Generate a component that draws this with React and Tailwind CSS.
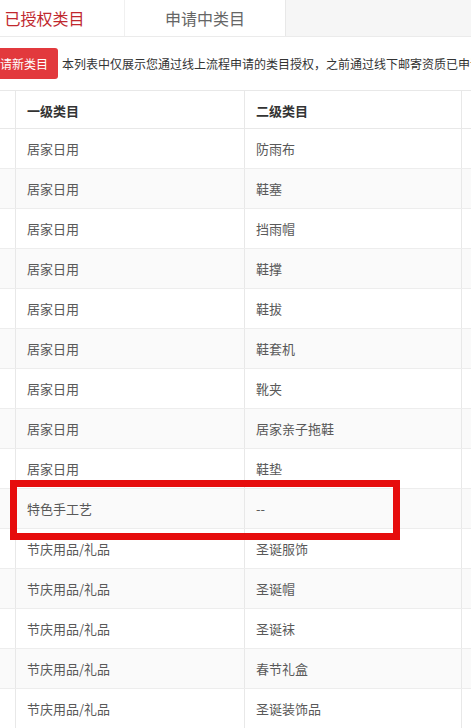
import React from "react";

const rows = [
  ["居家日用", "防雨布"],
  ["居家日用", "鞋塞"],
  ["居家日用", "挡雨帽"],
  ["居家日用", "鞋撑"],
  ["居家日用", "鞋拔"],
  ["居家日用", "鞋套机"],
  ["居家日用", "靴夹"],
  ["居家日用", "居家亲子拖鞋"],
  ["居家日用", "鞋垫"],
  ["特色手工艺", "--"],
  ["节庆用品/礼品", "圣诞服饰"],
  ["节庆用品/礼品", "圣诞帽"],
  ["节庆用品/礼品", "圣诞袜"],
  ["节庆用品/礼品", "春节礼盒"],
  ["节庆用品/礼品", "圣诞装饰品"],
];

const cols = "grid grid-cols-[47px_229px_217px_160px]";
const cell = "flex items-center px-[11px] border-r border-[#e8e8e8]";

const App = () => {
  return (
    <div
      className="relative w-[471px] h-[728px] overflow-hidden bg-white text-[#595959]"
      style={{ fontFamily: '"Noto Sans CJK SC", "Noto Sans", sans-serif' }}
    >
      <div className="-ml-[35px] w-[700px]">
        {/* tabs */}
        <div className="flex h-[37px] border-b border-[#ebebeb] bg-[#f6f6f6]">
          <button className="w-[160px] h-[36px] bg-white border-r border-[#f0f0f0] text-[16px] text-[#c0282e]">
            已授权类目
          </button>
          <button className="w-[161px] h-[36px] bg-white border-r border-[#e8e8e8] text-[16px] text-[#666]">
            申请中类目
          </button>
        </div>

        {/* toolbar */}
        <div className="flex items-center gap-[4px] mt-[11px] ml-[13px]">
          <button className="h-[31px] px-[10px] rounded-[3px] bg-[#e2393d] text-white text-[12px] whitespace-nowrap">
            申请新类目
          </button>
          <p className="text-[12px] text-[#333] whitespace-nowrap">
            本列表中仅展示您通过线上流程申请的类目授权，之前通过线下邮寄资质已申请的类目不在此列表中展示
          </p>
        </div>

        {/* table */}
        <div className="mt-[11px] ml-[4px] border-t border-[#e8e8e8] text-[13px]">
          <div className={`${cols} h-[38px] border-b border-[#e8e8e8] text-[#333] font-semibold`}>
            <div className={cell}>序号</div>
            <div className={cell}>一级类目</div>
            <div className={cell}>二级类目</div>
            <div className={cell}>操作</div>
          </div>
          {rows.map(([first, second], i) => (
            <div
              key={i}
              className={`${cols} h-[40px] border-b border-[#ededed] ${
                i % 2 === 1 ? "bg-[#fafafa]" : "bg-white"
              }`}
            >
              <div className={`${cell} justify-center`}>{i + 1}</div>
              <div className={cell}>{first}</div>
              <div className={cell}>{second}</div>
              <div className={cell}></div>
            </div>
          ))}
        </div>
      </div>

      {/* annotation box */}
      <div className="absolute left-[10px] top-[480px] w-[390px] h-[60px] border-[7px] border-[#e60d0d]" />
    </div>
  );
};

export default App;
